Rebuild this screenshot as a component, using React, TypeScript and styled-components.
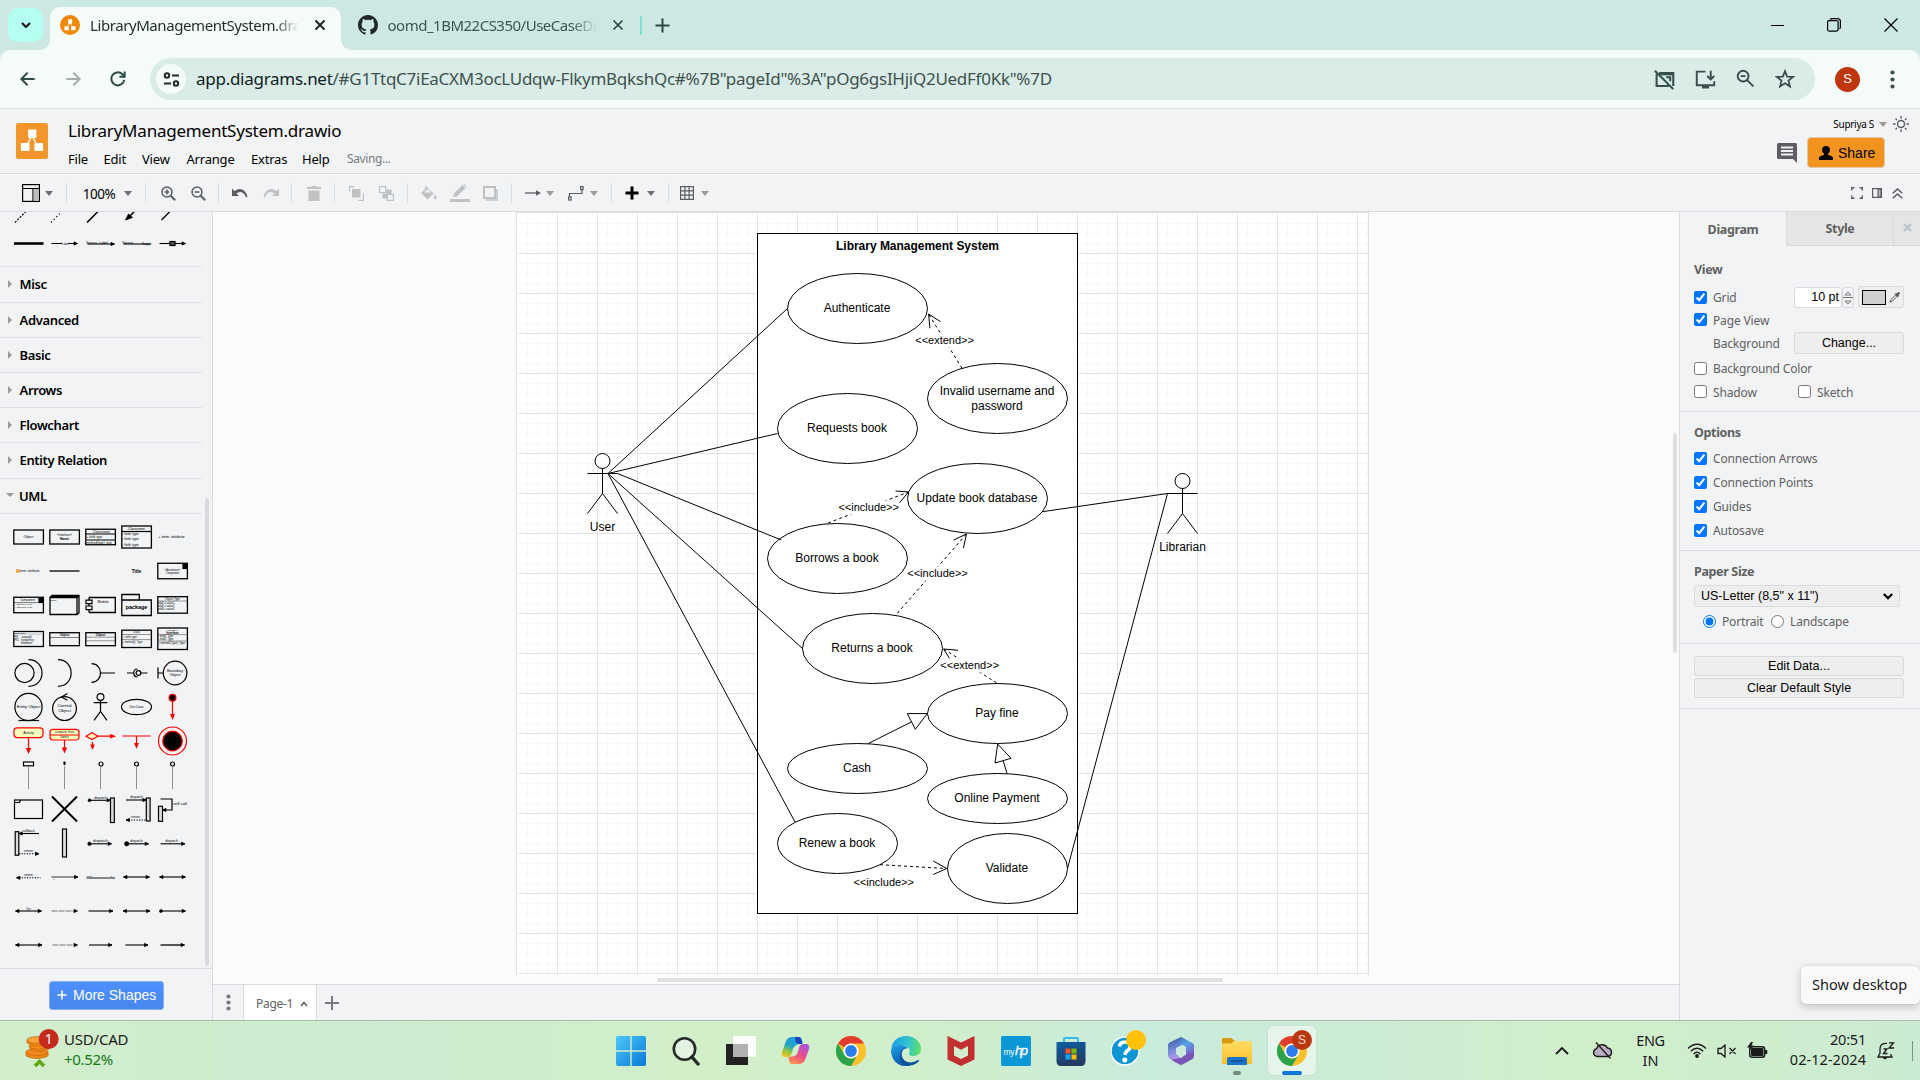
import React from "react";
import styled, { createGlobalStyle, css } from "styled-components";

const UI = `"Noto Sans", "Open Sans", sans-serif`;
const ARIAL = `"Liberation Sans", Arial, sans-serif`;

const GlobalStyle = createGlobalStyle`
  * { box-sizing: border-box; }
  html, body { margin: 0; padding: 0; overflow: hidden; }
  body { font-family: ${UI}; background: #f1f3f4; }
  button { font: inherit; border: 0; background: none; padding: 0; margin: 0; color: inherit; }
  svg { display: block; flex: none; }
`;

const Screen = styled.div`
  width: 1920px;
  height: 1080px;
  display: flex;
  flex-direction: column;
  overflow: hidden;
  position: relative;
`;

const Label = styled.span<{ $size: number; $ls?: number; $color?: string; $weight?: number; $arial?: boolean }>`
  font-family: ${(p) => (p.$arial ? ARIAL : UI)};
  font-size: ${(p) => p.$size}px;
  letter-spacing: ${(p) => p.$ls ?? 0}px;
  color: ${(p) => p.$color ?? "#000"};
  font-weight: ${(p) => p.$weight ?? 400};
  line-height: 20px;
  white-space: nowrap;
`;

/* ---------- Browser chrome ---------- */

const TabStrip = styled.div`
  height: 50px;
  flex: none;
  background: #cde8e2;
  display: flex;
  align-items: center;
  padding-left: 8px;
`;

const TabSearch = styled.button`
  width: 35px;
  height: 34px;
  border-radius: 10px;
  background: #b4fff2;
  display: grid;
  place-items: center;
`;

const Tab = styled.div<{ $active?: boolean; $w: number }>`
  width: ${(p) => p.$w}px;
  height: 43px;
  align-self: flex-end;
  display: flex;
  align-items: center;
  position: relative;
  padding-bottom: 7px;
  ${(p) =>
    p.$active
      ? css`
          margin-left: 7px;
          padding-left: 10px;
          background: #f4fbf8;
          border-radius: 10px 10px 0 0;
          &::before, &::after {
            content: "";
            position: absolute;
            bottom: 0;
            width: 10px;
            height: 10px;
          }
          &::before { left: -10px; background: radial-gradient(circle at 0 0, transparent 9.5px, #f4fbf8 10px); }
          &::after { right: -10px; background: radial-gradient(circle at 100% 0, transparent 9.5px, #f4fbf8 10px); }
        `
      : css`
          padding-left: 17px;
        `}
`;

const TabTitle = styled.div<{ $w: number; $ml: number }>`
  width: ${(p) => p.$w}px;
  margin-left: ${(p) => p.$ml}px;
  overflow: hidden;
  mask-image: linear-gradient(90deg, #000 88%, transparent 100%);
`;

const TabClose = styled.button<{ $ml: number }>`
  margin-left: ${(p) => p.$ml}px;
`;

const TabDivider = styled.i`
  width: 2px;
  height: 19px;
  background: #7ce3d3;
`;

const NewTab = styled.button`
  margin-left: 13px;
`;

const WindowButtons = styled.div`
  margin-left: auto;
  padding-right: 22px;
  display: flex;
  align-items: center;
  gap: 43px;
`;

const NavBar = styled.div`
  height: 59px;
  flex: none;
  background: #f4fbf8;
  border-bottom: 1px solid #dbe2e1;
  border-radius: 10px 10px 0 0;
  display: flex;
  align-items: center;
  padding-left: 18px;
`;

const NavBack = styled.div`
  background: #cde8e2;
  flex: none;
`;

const NavButtons = styled.div`
  display: flex;
  width: 132px;
  gap: 25px;
`;

const Omnibox = styled.div`
  width: 1665px;
  height: 42px;
  border-radius: 21px;
  background: #d9ece7;
  display: flex;
  align-items: center;
  padding: 0 20px 0 6px;
`;

const SiteInfo = styled.div`
  width: 30px;
  height: 30px;
  border-radius: 50%;
  background: #f4fbf8;
  display: grid;
  place-items: center;
  margin-right: 10px;
`;

const OmniActions = styled.div`
  margin-left: auto;
  display: flex;
  gap: 20px;
`;

const Avatar = styled.div`
  width: 25px;
  height: 25px;
  border-radius: 50%;
  background: #bf360c;
  margin-left: 20px;
  display: grid;
  place-items: center;
`;

const NavMenu = styled.div`
  margin-left: 30px;
`;

/* ---------- Editor header ---------- */

const Header = styled.header`
  height: 65px;
  flex: none;
  background: #f1f3f5;
  border-bottom: 1px solid #d8dadd;
  display: flex;
  padding: 14px 11px 0 16px;
`;

const TitleBlock = styled.div`
  margin-left: 20px;
  display: flex;
  flex-direction: column;
`;

const FileTitle = styled.div`
  height: 24px;
  margin-top: -4px;
  display: flex;
  align-items: center;
`;

const MenuRow = styled.nav`
  display: flex;
  margin-top: 6px;
  height: 20px;
  align-items: center;
`;

const MenuItem = styled.span<{ $w: number }>`
  width: ${(p) => p.$w}px;
  display: flex;
`;

const HeaderRight = styled.div`
  margin-left: auto;
  display: flex;
  flex-direction: column;
  align-items: flex-end;
  margin-top: -8px;
`;

const UserRow = styled.div`
  display: flex;
  align-items: center;
  height: 18px;
  margin-bottom: 4px;
`;

const ShareRow = styled.div`
  display: flex;
  align-items: center;
  gap: 10px;
  margin-right: 24px;
`;

const ShareButton = styled.button`
  width: 78px;
  height: 31px;
  background: #f2931e;
  border: 1px solid #dcc9ae;
  border-radius: 4px;
  display: flex;
  align-items: center;
  padding-left: 11px;
  gap: 5px;
`;

const Toolbar = styled.div`
  height: 38px;
  flex: none;
  background: #f1f3f5;
  border-top: 1px solid #fff;
  border-bottom: 1px solid #d8dadd;
  display: flex;
  align-items: center;
`;

const Slot = styled.span<{ $w: number; $ml: number; $dim?: boolean }>`
  width: ${(p) => p.$w}px;
  margin-left: ${(p) => p.$ml}px;
  display: flex;
  justify-content: center;
  color: ${(p) => (p.$dim ? "#bfc1c3" : "#5b5d60")};
`;

const Zoom = styled.div`
  padding-top: 2px;
  display: flex;
`;

const Sep = styled.i<{ $ml: number }>`
  width: 1px;
  height: 20px;
  background: #dcdfe2;
  margin-left: ${(p) => p.$ml}px;
`;

const Caret = styled.i<{ $c?: string }>`
  width: 0;
  height: 0;
  border: 4.5px solid transparent;
  border-top: 5px solid ${(p) => p.$c ?? "#6b6d70"};
  border-bottom: 0;
`;

const ToolbarRight = styled.div`
  margin-left: auto;
  display: flex;
  gap: 8px;
  padding-right: 17px;
  align-items: center;
`;

/* ---------- Workspace ---------- */

const Workspace = styled.div`
  height: 808px;
  flex: none;
  display: flex;
  background: #f1f3f5;
`;

const Sidebar = styled.aside`
  width: 213px;
  border-right: 1px solid #d8dadd;
  display: flex;
  flex-direction: column;
`;

const Palette = styled.div`
  height: 756px;
  overflow: hidden;
  display: flex;
`;

const PaletteBody = styled.div`
  width: 202px;
`;

const PaletteTrack = styled.div`
  padding: 286px 0 0 3px;
`;

const PaletteThumb = styled.i`
  display: block;
  width: 4px;
  height: 468px;
  border-radius: 2px;
  background: #d9dadd;
`;

const ShapeGrid = styled.div<{ $mt?: number; $pt?: number; $h?: number }>`
  display: grid;
  grid-template-columns: repeat(5, 36px);
  grid-auto-rows: 34px;
  padding-left: 10px;
  margin-top: ${(p) => p.$mt ?? 0}px;
  padding-top: ${(p) => p.$pt ?? 0}px;
  height: ${(p) => (p.$h ? `${p.$h}px` : "auto")};
`;

const Category = styled.div<{ $h: number }>`
  height: ${(p) => p.$h}px;
  padding-bottom: ${(p) => (p.$h > 35 ? 2 : 0)}px;
  border-top: 1px solid #dfe1e4;
  display: flex;
  align-items: center;
`;

const Twisty = styled.i<{ $open?: boolean }>`
  width: 0;
  height: 0;
  margin: ${(p) => (p.$open ? "0 5px 2px 6px" : "0 7.5px 0 8px")};
  ${(p) =>
    p.$open
      ? css`border: 4.5px solid transparent; border-top: 4px solid #9a9a9a; border-bottom: 0;`
      : css`border: 4.5px solid transparent; border-left: 4.5px solid #9a9a9a; border-right: 0;`}
`;

const PaletteEnd = styled.div`
  border-top: 1px solid #dfe1e4;
`;

const SidebarFooter = styled.div`
  flex: 1;
  border-top: 1px solid #d8dadd;
  padding: 12px 0 0 49px;
`;

const MoreShapes = styled.button`
  width: 115px;
  height: 29px;
  border-radius: 3px;
  border: 1px solid #86aef0;
  background: linear-gradient(#4d90fe, #4787ed);
  display: flex;
  align-items: center;
  gap: 6px;
  padding: 0 0 1px 7px;
`;

const Center = styled.main`
  width: 1466px;
  display: flex;
  flex-direction: column;
`;

const PageTabs = styled.div`
  height: 36px;
  border-top: 1px solid #d8dadd;
  display: flex;
  align-items: center;
`;

const PageMenu = styled.div`
  width: 31px;
  height: 35px;
  border-right: 1px solid #d8dadd;
  display: grid;
  place-items: center;
`;

const PageTab = styled.div`
  width: 73px;
  height: 35px;
  background: #fff;
  border-right: 1px solid #d8dadd;
  display: flex;
  align-items: center;
  gap: 7px;
  padding: 2px 0 0 12px;
`;

const AddPage = styled.button`
  margin-left: 8px;
`;

/* ---------- Format panel ---------- */

const Format = styled.aside`
  width: 241px;
  border-left: 1px solid #d8dadd;
`;

const FormatTabs = styled.div`
  height: 34px;
  display: flex;
`;

const FormatTab = styled.div<{ $w: number; $off?: boolean }>`
  width: ${(p) => p.$w}px;
  height: 34px;
  display: flex;
  align-items: center;
  justify-content: center;
  ${(p) =>
    p.$off
      ? css`
          background: #e5e5e5;
          border-left: 1px solid #d8dadd;
          border-bottom: 1px solid #d8dadd;
        `
      : css`
          padding-top: 2px;
        `}
`;

const CloseBox = styled.span`
  padding-bottom: 3px;
`;

const Section = styled.section<{ $h: number; $pt: number }>`
  height: ${(p) => p.$h}px;
  padding: ${(p) => p.$pt}px 15px 0 14px;
  border-bottom: 1px solid #d8dadd;
`;

const Heading = styled.div<{ $mb: number }>`
  height: 20px;
  display: flex;
  margin-bottom: ${(p) => p.$mb}px;
`;

const Row = styled.div<{ $h: number; $indent?: number }>`
  height: ${(p) => p.$h}px;
  padding-left: ${(p) => p.$indent ?? 0}px;
  display: flex;
  align-items: center;
  input { margin: 0; width: 13px; height: 13px; flex: none; }
`;

const FieldText = styled.span<{ $w?: number; $ml?: number }>`
  margin-left: ${(p) => p.$ml ?? 6}px;
  width: ${(p) => (p.$w ? `${p.$w}px` : "auto")};
  padding-top: 2px;
  display: flex;
`;

const SizeField = styled.div`
  width: 48px;
  height: 21px;
  background: #fff;
  border: 1px solid #d8dadd;
  border-radius: 3px;
  display: flex;
  align-items: center;
  justify-content: flex-end;
  padding-right: 2px;
`;

const Spinner = styled.div`
  width: 12px;
  height: 21px;
  border: 1px solid #d8dadd;
  border-radius: 3px;
`;

const ColorButton = styled.button`
  margin-left: 4px;
  width: 46px;
  height: 22px;
  border: 1px solid #d8dadd;
  border-radius: 3px;
  background: #eee;
  display: flex;
  align-items: center;
  padding-left: 3px;
  gap: 3px;
`;

const Swatch = styled.i`
  width: 24px;
  height: 15px;
  border: 1px solid #000;
  background: #d0d0d0;
`;

const PlainButton = styled.button<{ $w: number; $h: number; $mb?: number }>`
  width: ${(p) => p.$w}px;
  height: ${(p) => p.$h}px;
  margin-bottom: ${(p) => p.$mb ?? 0}px;
  border: 1px solid #d8dadd;
  border-radius: 3px;
  background: #eee;
  display: flex;
  align-items: center;
  justify-content: center;
`;

const PaperSelect = styled.div`
  width: 206px;
  height: 22px;
  border: 1px solid #d8dadd;
  border-radius: 3px;
  background: #eee;
  display: flex;
  align-items: center;
  justify-content: space-between;
  padding: 0 6px;
`;

/* ---------- Desktop taskbar ---------- */

const Taskbar = styled.footer`
  height: 60px;
  flex: none;
  border-top: 1px solid #a9b8aa;
  background: linear-gradient(90deg, #d2eecb 0%, #cdecd2 18%, #d2efc9 36%, #d0eecd 50%, #c9ebdc 60%, #cdecd4 72%, #d2efcb 83%, #cbebd2 100%);
  display: flex;
  align-items: center;
`;

const Widget = styled.div`
  width: 603px;
  padding: 0 0 4px 25px;
  display: flex;
  align-items: center;
`;

const Stack = styled.div<{ $align?: string; $ml?: number; $w?: number; $up?: number }>`
  display: flex;
  flex-direction: column;
  align-items: ${(p) => p.$align ?? "flex-start"};
  margin-left: ${(p) => p.$ml ?? 0}px;
  width: ${(p) => (p.$w ? `${p.$w}px` : "auto")};
  padding-bottom: ${(p) => p.$up ?? 0}px;
`;

const Apps = styled.div`
  display: grid;
  grid-template-columns: repeat(13, 55.1px);
`;

const AppSlot = styled.div<{ $active?: boolean; $running?: boolean }>`
  height: 49px;
  display: grid;
  place-items: center;
  position: relative;
  border-radius: 5px;
  ${(p) =>
    p.$active &&
    css`
      width: 48px;
      justify-self: center;
      background: rgba(255, 255, 255, 0.52);
      box-shadow: 0 0 1px rgba(0, 0, 0, 0.25);
    `}
  ${(p) =>
    (p.$active || p.$running) &&
    css`
      &::after {
        content: "";
        position: absolute;
        bottom: 0;
        height: 4px;
        border-radius: 2px;
        width: ${p.$active ? 20 : 8}px;
        background: ${p.$active ? "#0b78d6" : "#76897c"};
      }
    `}
`;

const Tray = styled.div`
  margin-left: auto;
  display: flex;
  align-items: center;
  height: 59px;
`;

const TrayIcon = styled.span<{ $ml: number }>`
  margin-left: ${(p) => p.$ml}px;
`;

const DesktopEdge = styled.i`
  width: 1px;
  height: 20px;
  background: #7d8f82;
  margin: 0 7px 0 17px;
`;

const Tooltip = styled.div`
  position: absolute;
  right: 0;
  bottom: 76px;
  width: 119px;
  height: 38px;
  border-radius: 5px;
  background: #f9f9fa;
  box-shadow: 0 3px 8px rgba(0, 0, 0, 0.2), 0 0 1px rgba(0, 0, 0, 0.25);
  display: flex;
  align-items: center;
  padding: 0 0 2px 11px;
`;

/* ---------- Diagram ---------- */

type UseCase = { x: number; y: number; w: number; h: number; lines: string[] };

const useCases: UseCase[] = [
  { x: 787.5, y: 273.5, w: 140, h: 70, lines: ["Authenticate"] },
  { x: 927.5, y: 363.5, w: 140, h: 70, lines: ["Invalid username and", "password"] },
  { x: 777.5, y: 393.5, w: 140, h: 70, lines: ["Requests book"] },
  { x: 907.5, y: 463.5, w: 140, h: 70, lines: ["Update book database"] },
  { x: 767.5, y: 523.5, w: 140, h: 70, lines: ["Borrows a book"] },
  { x: 802.5, y: 613.5, w: 140, h: 70, lines: ["Returns a book"] },
  { x: 927.5, y: 683.5, w: 140, h: 60, lines: ["Pay fine"] },
  { x: 787.5, y: 743.5, w: 140, h: 50, lines: ["Cash"] },
  { x: 927.5, y: 773.5, w: 140, h: 50, lines: ["Online Payment"] },
  { x: 777.5, y: 813.5, w: 120, h: 60, lines: ["Renew a book"] },
  { x: 947.5, y: 833.5, w: 120, h: 70, lines: ["Validate"] },
];

const associations = [
  "M608 473.5L787.5 308.5",
  "M608 473.5L777.5 433.5",
  "M617.5 473.5L781.3 540",
  "M608 473.5L802.5 648.5",
  "M608 473.5L795 822",
  "M1167.5 493.5L1042.4 511.7",
  "M1167.5 493.5L1067.5 868.5",
  "M868.3 743.5L911.3 722",
  "M1007 773.5L1003.3 761",
];

const dependencies = [
  { line: "M962 368.3L928.6 314", head: "M929.9 328.3L928.6 314L940.6 321.7", text: "<<extend>>", tx: 944.6, ty: 340.5, w: 58 },
  { line: "M828 523L908.5 492", head: "M895.5 491L908.5 492L899.6 502.7", text: "<<include>>", tx: 868.7, ty: 507.5, w: 60 },
  { line: "M897.3 613.3L966.5 534", head: "M953.6 540L966.5 534L963.4 548", text: "<<include>>", tx: 937.5, ty: 573.5, w: 60 },
  { line: "M996.7 683L943.7 649", head: "M958 650.3L943.7 649L949.7 658.7", text: "<<extend>>", tx: 969.7, ty: 665.5, w: 58 },
  { line: "M880 864.7L946.7 868.5", head: "M933.3 861L946.7 868.5L933.3 874.5", text: "<<include>>", tx: 883.7, ty: 882.5, w: 60 },
];

const Board = styled.svg`
  background: #fbfbfb;
  text {
    font-family: ${ARIAL};
    font-size: 12px;
    text-anchor: middle;
    fill: #000;
  }
  .edge { font-size: 11px; }
  .title { font-weight: 700; }
`;

const Actor = ({ x, y, name }: { x: number; y: number; name: string }) => (
  <g stroke="#000" fill="none">
    <circle cx={x} cy={y + 7.5} r={7.5} fill="#fff" />
    <path d={`M${x} ${y + 15}V${y + 40}M${x - 15} ${y + 20}H${x + 15}M${x - 15} ${y + 60}L${x} ${y + 40}L${x + 15} ${y + 60}`} />
    <text x={x} y={y + 77} stroke="none">{name}</text>
  </g>
);

const Diagram = () => (
  <Board width="1466" height="772" viewBox="213 212 1466 772">
    <defs>
      <pattern id="minor" x="517" y="213" width="10" height="10" patternUnits="userSpaceOnUse">
        <path d="M0.5 0V10M0 0.5H10" stroke="#f8f8f8" fill="none" />
      </pattern>
      <pattern id="major" x="517" y="213" width="40" height="40" patternUnits="userSpaceOnUse">
        <path d="M0.5 0V40M0 0.5H40" stroke="#e4e4e4" fill="none" />
      </pattern>
    </defs>
    <rect x="516" y="212" width="853" height="763" fill="#dfe0e1" />
    <rect x="517" y="213" width="851" height="762" fill="#fff" />
    <rect x="518" y="214" width="850" height="761" fill="url(#minor)" />
    <rect x="518" y="214" width="850" height="761" fill="url(#major)" />
    <rect x="757.5" y="233.5" width="320" height="680" fill="#fff" stroke="#000" />
    <text className="title" x="917.5" y="250" textLength="163">Library Management System</text>
    {useCases.map((u) => (
      <g key={u.lines[0]}>
        <ellipse cx={u.x + u.w / 2} cy={u.y + u.h / 2} rx={u.w / 2} ry={u.h / 2} fill="#fff" stroke="#000" />
        {u.lines.map((l, i) => (
          <text key={l} x={u.x + u.w / 2 - 0.5} y={u.y + u.h / 2 + 3.5 + (i - (u.lines.length - 1) / 2) * 15}>{l}</text>
        ))}
      </g>
    ))}
    {associations.map((d) => <path key={d} d={d} stroke="#000" fill="none" />)}
    <path d="M927.3 713.6H907.3L915.3 729.3Z M997.7 744L1011 758.3L995 763Z" fill="#fff" stroke="#000" />
    {dependencies.map((d) => (
      <g key={d.line}>
        <path d={d.line} stroke="#000" strokeDasharray="3 3" fill="none" />
        <path d={d.head} stroke="#000" fill="none" />
        <rect x={d.tx - d.w / 2} y={d.ty - 7} width={d.w} height="14" fill="#fff" />
        <text className="edge" x={d.tx} y={d.ty + 3.5}>{d.text}</text>
      </g>
    ))}
    <Actor x={602.5} y={453.5} name="User" />
    <Actor x={1182.5} y={473.5} name="Librarian" />
    <rect x="657" y="978" width="566" height="4" rx="2" fill="#dfdfdf" />
    <rect x="1673" y="433" width="4" height="220" rx="2" fill="#dfdfdf" />
  </Board>
);

/* ---------- Palette thumbnails ---------- */

const ThumbSvg = styled.svg`
  stroke: #000;
  fill: none;
  stroke-width: 1.2;
  overflow: hidden;
  font-family: ${ARIAL};
  font-size: 3.4px;
  text {
    stroke: none;
    fill: #000;
    text-anchor: middle;
  }
`;

const T = ({ children }: { children?: React.ReactNode }) => (
  <ThumbSvg width="36" height="34" viewBox="-18.5 -17 36 34">{children}</ThumbSvg>
);

const Tri = ({ x, y = 0, dir = 1, fill = "#000" }: { x: number; y?: number; dir?: number; fill?: string }) => (
  <path d={`M${x} ${y}L${x - 3.5 * dir} ${y - 1.7}V${y + 1.7}Z`} fill={fill} strokeWidth={0.6} />
);

const Line = ({ a = -13, b = 13, y = 0, dash, end = true, start, w = 1.1, c = "#000" }: {
  a?: number; b?: number; y?: number; dash?: string; end?: boolean; start?: boolean; w?: number; c?: string;
}) => (
  <>
    <path d={`M${a} ${y}H${b}`} strokeDasharray={dash} strokeWidth={w} stroke={c} />
    {end && <Tri x={b} y={y} />}
    {start && <Tri x={a} y={y} dir={-1} />}
  </>
);

const Box = ({ h, y = -h / 2 }: { h: number; y?: number }) => (
  <rect x={-14.7} y={y} width={29.6} height={h} strokeWidth={1.3} />
);

const topRow = [
  <T key="a"><path d="M-13.5 13.5L13 -13" strokeDasharray="2 1.4" /></T>,
  <T key="b"><path d="M-13.5 13.5L13 -13" strokeDasharray="1.2 2.6" /></T>,
  <T key="c"><path d="M-13.5 13.5L13 -13" strokeWidth={1.5} /></T>,
  <T key="d"><path d="M-9 9.5L13 -13" strokeWidth={1.5} /><path d="M-11 11L-4 8.5L-8 5Z" fill="#000" strokeWidth={0.8} /></T>,
  <T key="e"><path d="M-11 11L13 -13" strokeWidth={1.3} /></T>,
  <T key="f"><path d="M-14.5 0.5H15" strokeWidth={2.6} /></T>,
  <T key="g"><path d="M-13 0.5H-2.5M4 0.5H13" strokeWidth={1.1} /><Tri x={13} y={0.5} /><text x="1" y="1.6" fontSize="2.8">Label</text></T>,
  <T key="h"><Line a={-13} b={14} y={1} /><text x="-9" y="0.6">Source</text><text x="3" y="0.6">Label</text></T>,
  <T key="i"><Line a={-13} b={14} y={1} end={false} /><text x="-9" y="0.6">Source</text><text x="10" y="1.8">Target</text></T>,
  <T key="j"><Line a={-13} b={13} y={0.5} /><rect x="-2.5" y="-1.5" width="5" height="4" fill="#555" /></T>,
];

const attrs = (ys: number[]) => ys.map((y) => <text key={y} x="-6.5" y={y}>+ field: type</text>);

const umlShapes = [
  <T><Box h={14} /><text x="0" y="1">Object</text></T>,
  <T><Box h={14} /><text x="0" y="-1" fontSize="3">«interface»</text><text x="0" y="2.9" fontWeight="700">Name</text></T>,
  <T><Box h={15.5} /><path d="M-14.7 -3H15M-14.7 3H15" /><text x="1" y="-4.2">Classname</text><text x="-6" y="1.4" fontSize="3">+ field: type</text><text x="-2.500" y="6.6" fontSize="3">+ method(type): type</text></T>,
  <T><Box h={22} /><path d="M-14.7 -5.5H15" /><text x="0" y="-7">Classname</text>{attrs([-2.2, 3, 8.5])}</T>,
  <T><text x="-1" y="1" fontSize="3.8">+ item: attribute</text></T>,

  <T><rect x="-12.5" y="-1.8" width="3.6" height="3.6" fill="#f0a63a" stroke="none" /><text x="1" y="1" fontSize="3.3">item: attribute</text></T>,
  <T><Line a={-15} b={15} end={false} w={1.3} /></T>,
  <T />,
  <T><text x="0" y="1.8" fontSize="4.6" fontWeight="700">Title</text></T>,
  <T><Box h={15.5} /><rect x="10.5" y="-6.5" width="3.6" height="4" fill="#000" /><text x="0" y="-0.5" fontSize="2.6">«Annotation»</text><text x="0" y="2.6" fontSize="2.6">Component</text></T>,

  <T><Box h={15.5} /><rect x="10.5" y="-6.5" width="3.6" height="4" fill="#000" /><path d="M-14.7 -2.4H10" strokeWidth={0.5} /><text x="-1" y="-4" fontSize="2.8">Component</text><text x="-5.5" y="0" fontSize="2.4">+ Attribute1: Type</text><text x="-5.5" y="3" fontSize="2.4">+ Attribute2: Type</text></T>,
  <T><path d="M-14.5 -7.5H12.5V9.5H-14.5ZM-14.5 -7.5L-12.5 -9.5H14.5V8L12.5 9.5M12.5 -7.5L14.5 -9.5" strokeWidth={1.3} /><path d="M-13 -8.5H14" strokeWidth={1.6} /><text x="-11" y="-4.5" fontSize="2.4">Block</text></T>,
  <T><path d="M-11.5 -7.5H14.8V7.5H-11.5M-11.5 -7.5V7.5" strokeWidth={1.3} /><path d="M-14.5 -4.8H-8.5V-1.4H-14.5ZM-14.5 1H-8.5V4.6H-14.5Z" fill="#f1f3f5" /><text x="2.5" y="-2.5">Module</text></T>,
  <T><path d="M-14.7 -5H14.8V10.5H-14.7ZM-14.7 -5V-10.5H2.8V-5" strokeWidth={1.3} /><text x="0" y="3.8" fontSize="5.4" fontWeight="700">package</text></T>,
  <T><Box h={16.5} y={-8.3} /><path d="M-14.7 -4H15" strokeWidth={0.4} /><text x="0" y="-5.2" fontSize="2.8">Object:Type</text><text x="-6.5" y="-1.2" fontSize="2.6">field1 = value1</text><text x="-6.5" y="2" fontSize="2.6">field2 = value2</text><text x="-6.5" y="5.4" fontSize="2.6">field3 = value3</text></T>,

  <T><Box h={15} /><rect x="-14" y="-7" width="28" height="3" fill="#d5d7da" stroke="none" /><text x="-9" y="-4.6" fontSize="2.4">Tablename</text><text x="-12" y="-1.5" fontSize="2.6">PK</text><text x="-2" y="-1.5" fontSize="2.6">uniqueId</text><text x="-12" y="1.8" fontSize="2.6">FK1</text><text x="-1" y="1.8" fontSize="2.6">foreignKey</text><text x="-2" y="5" fontSize="2.6">fieldname</text></T>,
  <T><Box h={13} y={-6.3} /><path d="M-14.7 -1.5H15" strokeWidth={0.5} /><text x="0" y="-3.2" fontSize="3" fontWeight="700">Object</text></T>,
  <T><Box h={13} y={-6.3} /><path d="M-14.7 -1.8H15M-14.7 1.8H15" strokeWidth={0.4} /><text x="0" y="-3.2" fontSize="3" fontWeight="700">Object</text></T>,
  <T><Box h={17.3} y={-8.8} /><path d="M-14.7 -4.5H15M-14.7 0.6H15" strokeWidth={0.4} /><text x="0" y="-5.6" fontSize="2.8">Class</text><text x="-6.5" y="-1.2" fontSize="2.6">+ field: type</text><text x="-4" y="4" fontSize="2.6">+ method(): Type</text></T>,
  <T><Box h={21.5} y={-11} /><path d="M-14.7 -4.4H15M-14.7 2H15" strokeWidth={0.4} /><text x="0" y="-8.2" fontSize="2.4">«interface»</text><text x="0" y="-5.4" fontSize="3" fontWeight="700">Interface</text><text x="-7" y="-1.6" fontSize="2.6">+ field1: Type</text><text x="-7" y="1.2" fontSize="2.6">+ field2: Type</text><text x="-1" y="5.2" fontSize="2.6">+ method1(Type): Type</text></T>,

  <T><circle cx="-4" r="9.6" /><path d="M0 -13.3C18 -13.3 18 13.3 0 13.3" /></T>,
  <T><path d="M-6.5 -13.3C11 -13.3 11 13.3 -6.5 13.3" /></T>,
  <T><path d="M-9 -9.3C3 -9.3 3 9.3 -9 9.3M0 0H14.5" /></T>,
  <T><path d="M-9.5 0H-2.5M4.5 0H11" /><circle cx="2" r="2.4" /><path d="M1 -4C-4 -4 -4 4 1 4" /></T>,
  <T><circle cx="2.6" r="11.8" /><path d="M-14.5 -5.5V5.5M-14.5 0H-9.2" /><text x="2.6" y="-1.2" fontSize="3.8">Boundary</text><text x="2.6" y="3.4" fontSize="3.8">Object</text></T>,

  <T><circle r="13.6" /><path d="M-10 13.5H10.5" /><text x="0" y="0.5" fontSize="4.2">Entity Object</text></T>,
  <T><circle cy="1.6" r="11.9" /><path d="M3 -13.5L-3 -10L3 -6.8" /><text x="0" y="0.4" fontSize="4.4">Control</text><text x="0" y="5.4" fontSize="4.4">Object</text></T>,
  <T><circle cy="-10" r="3.4" /><path d="M0 -6.6V4.5M-6.8 -4.3H6.8M-6.5 13.3L0 4.5L6.5 13.3" /></T>,
  <T><ellipse rx="15" ry="7.7" /><text x="0" y="1" fontSize="3.2">Use Case</text></T>,
  <T><g stroke="#f00"><circle cy="-9.3" r="3.4" fill="#000" /><path d="M0 -6V11M-1.6 7.5L0 11.4L1.6 7.5Z" fill="#f00" /></g></T>,

  <T><g stroke="#f00"><rect x="-14.5" y="-13.2" width="29" height="9.8" rx="3" fill="#ffffc0" /><path d="M0 -3.4V11M-1.8 7.5L0 11.6L1.8 7.5Z" fill="#f00" /></g><text x="0" y="-7.2">Activity</text></T>,
  <T><g stroke="#f00"><rect x="-14.5" y="-11.6" width="29" height="10.6" rx="3" fill="#ffffc0" /><path d="M-14.5 -6H14.5M0 -1V10M-1.8 7L0 11L1.8 7Z" fill="#f00" /></g><text x="0" y="-7.6" fontSize="2.6">Composite State</text><text x="0" y="-2.6" fontSize="2.6">Subtitle</text></T>,
  <T><g stroke="#f00"><path d="M-14.5 -4.8L-8.5 -8.2L-2.5 -4.8L-8.5 -1.5Z" fill="#ffffc0" /><path d="M-2.5 -4.8H12M10 -6.2L14 -4.8L10 -3.4ZM-8 1V7M-9.4 4L-8 7.5L-6.6 4Z" fill="#f00" /></g></T>,
  <T><g stroke="#f00"><path d="M-14.3 -5H14.3M0 -5V5M-1.6 2.5L0 6.4L1.6 2.5Z" fill="#f00" /></g></T>,
  <T><g stroke="#f00"><circle r="14" /><circle r="9.8" fill="#000" /></g></T>,

  <T><rect x="-5" y="-13" width="10" height="3.8" /><path d="M0 -9V14" stroke="#777" strokeWidth={0.8} /></T>,
  <T><path d="M0 -13.5V-10M-1.2 -12H1.2" strokeWidth={1.6} /><path d="M0 -9V14" stroke="#777" strokeWidth={0.8} /></T>,
  <T><circle cx="0.5" cy="-11" r="2" /><path d="M0 -9V14M-2.6 -11H-1.5" stroke="#777" strokeWidth={0.8} /></T>,
  <T><circle cy="-11" r="2" /><path d="M0 -9V14" stroke="#777" strokeWidth={0.8} /></T>,
  <T><circle cy="-11" r="2" /><path d="M0 -9V14" stroke="#777" strokeWidth={0.8} /></T>,

  <T><rect x="-14" y="-9" width="28" height="18.5" /><path d="M-14 -6.5H-9L-8 -9" /></T>,
  <T><path d="M-12.5 -12.5L12.5 12.5M12.5 -12.5L-12.5 12.5" strokeWidth={1.9} /></T>,
  <T><rect x="10" y="-11" width="3.8" height="24.5" fill="#ddd" /><Line a={-11} b={10} y={-8.7} /><circle cx="-11" cy="-8.7" r="1.5" fill="#000" strokeWidth={0.5} /><text x="0" y="-10.4">dispatch</text></T>,
  <T><rect x="9.8" y="-11" width="3.8" height="23" fill="#ddd" /><Line a={-10.5} b={9.8} y={-9} /><Line a={-10.5} b={9} y={11} dash="1.3 1.3" end={false} start /><text x="0" y="-11">dispatch</text><text x="-1" y="9">return</text></T>,
  <T><rect x="-14" y="-2.7" width="4" height="15" fill="#ddd" /><path d="M-12 -10H-0.5V1H-9" /><Tri x={-10} y={1} dir={-1} /><text x="7.5" y="-4.4" fontSize="4.2">self call</text></T>,

  <T><rect x="-13.3" y="-11.3" width="3.6" height="23.5" fill="#ddd" /><Line a={-9.7} b={10.5} y={-9.5} end={false} start /><Line a={-9.5} b={10.5} y={10.8} dash="1.3 1.3" /><text x="0" y="-11.5">callback</text><text x="0" y="8.6">return</text></T>,
  <T><rect x="-2" y="-14" width="4" height="28" fill="#ddd" /></T>,
  <T><Line a={-11} b={11} y={0.8} /><circle cx="-11" cy="0.8" r="1.8" fill="#000" strokeWidth={0.5} /><text x="0" y="-1.4" fontSize="4">dispatch</text></T>,
  <T><Line a={-10} b={12} y={0.8} /><circle cx="-9.8" cy="0.8" r="2.2" fill="#000" strokeWidth={0.6} /><text x="0" y="-1.4">dispatch</text></T>,
  <T><Line a={-12} b={12.5} y={0.8} /><text x="-1" y="-0.8">dispatch</text></T>,

  <T><Line a={-12} b={12} y={0.8} dash="1.3 1.3" end={false} start /><text x="0" y="-1.4">return</text></T>,
  <T><Line a={-13} b={13.5} y={0} c="#444" /><text x="-11" y="2.6" fontSize="2.2">1</text></T>,
  <T><Line a={-14} b={14.5} y={1} end={false} w={0.9} /><text x="-11" y="0" fontSize="2.4">name</text><text x="11" y="0" fontSize="2.4">1</text></T>,
  <T><Line start /></T>,
  <T><Line start /></T>,

  <T><Line start /><text x="0" y="-0.6" fontSize="2.6">Use</text></T>,
  <T><Line a={-13} dash="6 1" w={0.8} c="#555" /></T>,
  <T><Line a={-12} b={12.5} /></T>,
  <T><Line a={-13.5} b={13.5} start /></T>,
  <T><Line a={-12} b={13} /><circle cx="-11.5" r="1.6" fill="#000" strokeWidth={0.5} /></T>,

  <T><Line a={-13} b={13.5} start /></T>,
  <T><Line a={-12} dash="6 1" w={0.8} c="#555" /></T>,
  <T><Line a={-11.5} b={11.5} /></T>,
  <T><Line a={-11} b={11.5} /></T>,
  <T><Line a={-12} b={12} w={1.3} /></T>,
];

/* ---------- Icons ---------- */

const I = ({ w = 20, h = w, vb = "0 0 24 24", sw = 2, children, fill = "none" }: {
  w?: number; h?: number; vb?: string; sw?: number; fill?: string; children: React.ReactNode;
}) => (
  <svg width={w} height={h} viewBox={vb} fill={fill} stroke={fill === "none" ? "currentColor" : "none"} strokeWidth={sw}>{children}</svg>
);

const DrawioMark = () => (
  <g stroke="#fff" strokeWidth="1.4" fill="#fff">
    <path d="M16 13L9 25M16 13L23 25" fill="none" />
    <rect x="12" y="6.500" width="8.500" height="8.500" rx="1" stroke="none" />
    <rect x="4.5" y="20" width="9" height="8" rx="1" stroke="none" />
    <rect x="18.5" y="20" width="9" height="8" rx="1" stroke="none" />
  </g>
);

const Chrome = () => (
  <svg width="30" height="30" viewBox="0 0 30 30">
    <circle cx="15" cy="15" r="15" fill="#fbc02a" />
    <path d="M15 0A15 15 0 0 1 28 7.5H15A7.5 7.5 0 0 0 8.5 11.2L2 7.5A15 15 0 0 1 15 0Z" fill="#e33b2e" />
    <path d="M2 7.5L8.5 18.8A7.5 7.5 0 0 0 21.5 18.8L15 30A15 15 0 0 1 2 7.5Z" fill="#2ba24c" />
    <circle cx="15" cy="15" r="7.6" fill="#fff" />
    <circle cx="15" cy="15" r="5.9" fill="#2b7de9" />
  </svg>
);

const badge = (fill: string, text?: string) => (
  <g>
    <circle cx="25" cy="4" r="10" fill={fill} />
    {text && <text x="25" y="8.2" textAnchor="middle" fontFamily={ARIAL} fontSize="12" fill="#f7dfd6">{text}</text>}
  </g>
);

const OverIcon = styled.div`
  position: relative;
  > svg:last-child { position: absolute; left: 0; top: 0; overflow: visible; }
`;

const taskIcons: { id: string; icon: React.ReactNode; active?: boolean; running?: boolean }[] = [
  { id: "start", icon: (
    <svg width="30" height="30"><defs><linearGradient id="win" x2="1" y2="1"><stop stopColor="#4cc9fb" /><stop offset="1" stopColor="#0a78d6" /></linearGradient></defs>
      <path d="M2 0H14.3V14.3H0V2Q0 0 2 0ZM15.7 0H28Q30 0 30 2V14.3H15.7ZM0 15.7H14.3V30H2Q0 30 0 28ZM15.7 15.7H30V28Q30 30 28 30H15.7Z" fill="url(#win)" /></svg>) },
  { id: "search", icon: <svg width="28" height="30" viewBox="0 0 28 30" fill="none" stroke="#262a28"><circle cx="12.5" cy="13" r="10.7" strokeWidth="2.6" fill="#e3f3df" /><path d="M20 21L26 28" strokeWidth="3.4" strokeLinecap="round" /></svg> },
  { id: "taskview", icon: <svg width="30" height="30"><rect x="0" y="8" width="22" height="21" fill="#222" /><rect x="7" y="0" width="23" height="21" fill="#fff" opacity="0.92" /><rect x="7" y="8" width="15" height="13" fill="#b0b2b1" /></svg> },
  { id: "copilot", icon: (
    <svg width="29" height="27" viewBox="0 0 29 27"><defs>
      <linearGradient id="cpa" x1="0.6" y1="0" x2="0.2" y2="1"><stop stopColor="#1c9be8" /><stop offset="0.45" stopColor="#23a7c4" /><stop offset="0.75" stopColor="#9cc63f" /><stop offset="1" stopColor="#f6c21b" /></linearGradient>
      <linearGradient id="cpb" x1="0.7" y1="0" x2="0.2" y2="1"><stop stopColor="#b052dd" /><stop offset="0.55" stopColor="#ee5080" /><stop offset="1" stopColor="#fd9a50" /></linearGradient></defs>
      <path d="M11 0H19Q21 1 21.5 6L15 8Q12 10 11.5 14L10 18Q9 20 6 20H4Q0 20 1 15L5 4Q7 0 11 0Z" fill="url(#cpa)" />
      <path d="M14 0H18Q20 0 21.5 7H18Q15 7 14.5 4Z" fill="#1b45b8" />
      <path d="M18 27H10Q8 26 7.5 20L14 19Q17 17 17.5 13L18.5 9Q19.5 7 23 7H25Q29 7 28 12L24 23Q22 27 18 27Z" fill="url(#cpb)" /></svg>) },
  { id: "chrome", icon: <Chrome /> },
  { id: "edge", icon: (
    <svg width="30" height="30" viewBox="0 0 30 30"><defs>
      <linearGradient id="eda" x1="0" y1="0.3" x2="1" y2="0.4"><stop stopColor="#1b9de0" /><stop offset="0.55" stopColor="#2fc3d0" /><stop offset="1" stopColor="#5fdf66" /></linearGradient>
      <linearGradient id="edb" x2="0.4" y2="1"><stop stopColor="#1fa0e4" /><stop offset="1" stopColor="#0a5cae" /></linearGradient></defs>
      <path d="M0.3 13C1 5 7 0 15 0C24 0 30 6 30 13C30 18 26 20 22 20C19 20 17.5 19 18 17.5C20 15 18 9 11 9C6 9 2 11 0.3 13Z" fill="url(#eda)" />
      <path d="M0 14C1 11 5 8.5 11 9C14 9.3 16 10.5 17 12C12 12 10 16 11 20C12 25 18 28 23 26.5C20 29 17 30 14 30C6 30 0 23 0 14Z" fill="url(#edb)" />
      <path d="M17 12C12 12 9.5 16 10.5 20C12 27 20 28 26 24.5C28 23.5 28.5 24.5 27.5 25.5C25 28.5 20 30 15.5 30C10 28 8 23 9 18C10 14 13 11.5 17 12Z" fill="#11519c" /></svg>) },
  { id: "mcafee", icon: <svg width="28" height="30" viewBox="0 0 28 30"><path d="M0.5 0L14 6.5L27.5 0V23.5L14 30L0.5 23.5ZM7 10V19.5L14 23L21 19.5V10L14 13.7Z" fill="#c22f2f" fillRule="evenodd" /></svg> },
  { id: "myhp", icon: <svg width="30" height="30"><rect width="30" height="30" rx="1.5" fill="#0c97d6" /><text x="2.5" y="18.5" fontFamily={ARIAL} fontSize="8.5" fill="#fff" textLength="11">my</text><text x="14" y="19" fontFamily={ARIAL} fontSize="13.5" fontStyle="italic" fill="#fff" stroke="#fff" strokeWidth="0.3" textLength="13">hp</text></svg> },
  { id: "store", icon: (
    <svg width="30" height="30" viewBox="0 0 30 30"><defs><linearGradient id="st" x2="0.3" y2="1"><stop stopColor="#0d5fa5" /><stop offset="1" stopColor="#233a63" /></linearGradient></defs>
      <path d="M8 8V3Q8 2 9 2H21Q22 2 22 3V8" fill="none" stroke="#35b9ef" strokeWidth="2" /><path d="M0.5 6H29.5V25Q29.5 30 25 30H5Q0.5 30 0.5 25Z" fill="url(#st)" />
      <path d="M9.5 12.5H14.5V17.5H9.5Z" fill="#f25022" /><path d="M15.5 12.5H20.5V17.5H15.5Z" fill="#7fba00" /><path d="M9.5 18.5H14.5V23.5H9.5Z" fill="#17a8ee" /><path d="M15.5 18.5H20.5V23.5H15.5Z" fill="#ffb900" /></svg>) },
  { id: "help", icon: (
    <OverIcon><svg width="30" height="30"><circle cx="14" cy="15" r="14" fill="#0e96d4" stroke="#fff" strokeWidth="1.5" /><path d="M8.5 10.5Q9 6 14 6Q19 6 19.3 10Q19.3 13 16 15Q14.2 16.3 14 19" fill="none" stroke="#fff" strokeWidth="3.6" /><circle cx="13.8" cy="24" r="2.5" fill="#fff" /></svg>
      <svg width="30" height="30">{badge("#ffc107")}</svg></OverIcon>) },
  { id: "m365", icon: (
    <svg width="26" height="28" viewBox="0 0 26 28"><defs><linearGradient id="ma" x2="0.2" y2="1"><stop stopColor="#34518f" /><stop offset="0.5" stopColor="#6f8ad8" /><stop offset="1" stopColor="#c79bf0" /></linearGradient><linearGradient id="mb" x1="0" x2="0.6" y2="1"><stop stopColor="#3e63b8" /><stop offset="0.5" stopColor="#57a6e6" /><stop offset="1" stopColor="#7a63cf" /></linearGradient></defs>
      <path d="M13 0L16 7L8 11V17L13 21L8 26L1 21Q0 20 0 18V8Q0 6.5 1.5 5.5Z" fill="url(#ma)" />
      <path d="M13 0L24.5 6Q26 7 26 8.5V16L18 18V10L14 7.5L10 9Z" fill="url(#mb)" />
      <path d="M26 15V19Q26 21 24.5 22L14.5 27.5Q13 28.3 11.5 27.5L3 22.5L13 21L18 17.5Z" fill="#7b55b4" /></svg>) },
  { id: "explorer", running: true, icon: (
    <svg width="30" height="28" viewBox="0 0 30 28"><defs><linearGradient id="fo" x2="0" y2="1"><stop stopColor="#ffdc66" /><stop offset="1" stopColor="#fcbf2b" /></linearGradient></defs>
      <path d="M0 2Q0 1 1 1H9L13 4L9 8H0Z" fill="#d99a10" /><path d="M0 6.5H9L12 4H29Q30 4 30 5V27H0Z" fill="url(#fo)" /><path d="M5 28V22Q5 20 7 20H23Q25 20 25 22V28Z" fill="#1a73c9" /><path d="M9 24H21" stroke="#0a4d92" strokeWidth="1.5" /></svg>) },
  { id: "chrome-profile", active: true, icon: <OverIcon><Chrome /><svg width="30" height="30">{badge("#b9380f", "S")}</svg></OverIcon> },
];

const menu: [string, number][] = [["File", 35.5], ["Edit", 38.5], ["View", 44.5], ["Arrange", 64.5], ["Extras", 51], ["Help", 45]];

const FieldLabel = ({ children }: { children: string }) => <Label $size={12} $color="#616161" $ls={-0.15}>{children}</Label>;

const Check = ({ on, label, w }: { on?: boolean; label: string; w?: number }) => (
  <>
    <input type="checkbox" defaultChecked={on} />
    <FieldText $w={w}><FieldLabel>{label}</FieldLabel></FieldText>
  </>
);

const H = ({ children }: { children: string }) => <Label $size={12.5} $weight={700} $color="#616161" $ls={-0.35}>{children}</Label>;

const CategoryName = ({ children }: { children: string }) => <Label $size={13} $weight={600} $ls={-0.35}>{children}</Label>;

export default function App() {
  return (
    <Screen>
      <GlobalStyle />
      <TabStrip>
        <TabSearch><I w={12} vb="0 0 12 12"><path d="M2 4L6 8L10 4" stroke="#111" /></I></TabSearch>
        <Tab $active $w={291}>
          <svg width="20" height="20" viewBox="0 0 32 32"><circle cx="16" cy="16" r="16" fill="#f08705" /><g transform="translate(3.5 1.5) scale(.78 .82)"><DrawioMark /></g></svg>
          <TabTitle $w={209} $ml={10}><Label $size={15} $ls={-0.42} $color="#1f2b28">LibraryManagementSystem.drawio</Label></TabTitle>
          <TabClose $ml={15}><I w={12} vb="0 0 12 12" sw={1.9}><path d="M1.5 1.5L10.5 10.5M10.5 1.5L1.5 10.5" stroke="#17211f" /></I></TabClose>
        </Tab>
        <Tab $w={299}>
          <svg width="20" height="20" viewBox="0 0 16 16"><path fill="#20282b" d="M8 0C3.58 0 0 3.58 0 8c0 3.54 2.29 6.53 5.47 7.59.4.07.55-.17.55-.38 0-.19-.01-.82-.01-1.49-2.01.37-2.53-.49-2.69-.94-.09-.23-.48-.94-.82-1.13-.28-.15-.68-.52-.01-.53.63-.01 1.08.58 1.23.82.72 1.21 1.87.87 2.33.66.07-.52.28-.87.51-1.07-1.78-.2-3.64-.89-3.64-3.95 0-.87.31-1.59.82-2.15-.08-.2-.36-1.02.08-2.12 0 0 .67-.21 2.2.82.64-.18 1.32-.27 2-.27s1.36.09 2 .27c1.53-1.04 2.2-.82 2.2-.82.44 1.1.16 1.92.08 2.12.51.56.82 1.27.82 2.15 0 3.07-1.87 3.75-3.65 3.95.29.25.54.73.54 1.48 0 1.07-.01 1.93-.01 2.2 0 .21.15.46.55.38A8.01 8.01 0 0 0 16 8c0-4.42-3.58-8-8-8z" /></svg>
          <TabTitle $w={209} $ml={9.5}><Label $size={15} $ls={-0.5} $color="#3f5450">oomd_1BM22CS350/UseCaseDiagram</Label></TabTitle>
          <TabClose $ml={15}><I w={12} vb="0 0 12 12" sw={1.7}><path d="M1.5 1.5L10.5 10.5M10.5 1.5L1.5 10.5" stroke="#2c4440" /></I></TabClose>
        </Tab>
        <TabDivider />
        <NewTab><I w={15} vb="0 0 15 15" sw={2}><path d="M7.5 0.5V14.5M0.5 7.5H14.5" stroke="#2c4440" /></I></NewTab>
        <WindowButtons>
          <I w={13} vb="0 0 13 13" sw={1}><path d="M0 6.5H13" stroke="#000" /></I>
          <I w={14} vb="0 0 14 14" sw={1.2}><path d="M3 1.5Q3.5 .6 5 .6H10.5Q13.4 .6 13.4 3.5V9Q13.4 10.5 12.5 11" stroke="#000" /><rect x=".6" y="2.6" width="10.5" height="10.5" rx="1.5" stroke="#000" /></I>
          <I w={14} vb="0 0 14 14" sw={1.2}><path d="M.5 .5L13.5 13.5M13.5 .5L.5 13.5" stroke="#000" /></I>
        </WindowButtons>
      </TabStrip>
      <NavBack>
        <NavBar>
          <NavButtons>
            <I w={20} sw={2.3}><path d="M20 12H4M11.5 4.5L4 12L11.5 19.5" stroke="#2f4b47" /></I>
            <I w={20} sw={2.3}><path d="M4 12H20M12.5 4.5L20 12L12.5 19.5" stroke="#a3aeac" /></I>
            <I w={20} sw={2.4}><path d="M19.5 13A7.8 7.8 0 1 1 17.3 6.3L19.5 8.5" stroke="#2f4b47" /><path d="M20 3V9.3H13.7" stroke="#2f4b47" /></I>
          </NavButtons>
          <Omnibox>
            <SiteInfo><I w={17} vb="0 0 17 16" sw={2}><circle cx="4" cy="4" r="2.2" stroke="#1f2b28" /><path d="M9 4H16M1 12H8" stroke="#1f2b28" /><circle cx="13" cy="12" r="2.2" stroke="#1f2b28" /></I></SiteInfo>
            <Label $size={17} $ls={-0.27} $color="#3f524e"><Label $size={17} $ls={-0.27} $color="#10201d">app.diagrams.net</Label>/#G1TtqC7iEaCXM3ocLUdqw-FlkymBqkshQc#%7B"pageId"%3A"pOg6gsIHjiQ2UedFf0Kk"%7D</Label>
            <OmniActions>
              <I w={21} sw={2.4}><path d="M6 4.5H22V19.5M3 5.5V19.5H17M1 2L22 23M14 9.5H18.5V14" stroke="#3a4f4b" /><path d="M6 5.5H22" stroke="#3a4f4b" strokeWidth="3.5" /></I>
              <I w={21} sw={2.2}><path d="M12 3H2V18.5H22V14M18 2V11M14 8L18 12L22 8" stroke="#3a4f4b" /><path d="M8 20.5H16" stroke="#3a4f4b" strokeWidth="3.5" /></I>
              <I w={19} sw={2.4}><circle cx="9" cy="9" r="6.8" stroke="#3a4f4b" /><path d="M14 14L22 22M6 9H12" stroke="#3a4f4b" /></I>
              <I w={20}><path d="M12 2.5L14.6 9.2L21.7 9.5L16.2 14L18 21L12 17.1L6 21L7.8 14L2.3 9.5L9.4 9.2Z" stroke="#3a4f4b" strokeWidth="2.1" /></I>
            </OmniActions>
          </Omnibox>
          <Avatar><Label $size={13} $arial $color="#fff">S</Label></Avatar>
          <NavMenu><I w={5} h={19} vb="0 0 5 19" fill="#3a504c"><circle cx="2.5" cy="2.5" r="2.1" /><circle cx="2.5" cy="9.5" r="2.1" /><circle cx="2.5" cy="16.5" r="2.1" /></I></NavMenu>
        </NavBar>
      </NavBack>

      <Header>
        <svg width="32" height="36" viewBox="0 0 33 36" preserveAspectRatio="none"><rect width="33" height="36" rx="2" fill="#f2962b" /><g transform="translate(0.5 0)"><DrawioMark /></g></svg>
        <TitleBlock>
          <FileTitle><Label $size={17} $ls={-0.22}>LibraryManagementSystem.drawio</Label></FileTitle>
          <MenuRow>
            {menu.map(([name, w]) => <MenuItem key={name} $w={w}><Label $size={13} $ls={-0.2}>{name}</Label></MenuItem>)}
            <Label $size={12} $ls={-0.4} $color="#7b7d80">Saving...</Label>
          </MenuRow>
        </TitleBlock>
        <HeaderRight>
          <UserRow>
            <Label $size={10} $ls={-0.3}>Supriya S</Label>
            <Slot $w={10} $ml={4}><Caret $c="#9a9a9a" /></Slot>
            <Slot $w={16} $ml={5}>
              <I w={16} vb="0 0 16 16" sw={1.4}><circle cx="8" cy="8" r="3.5" /><path d="M8 0V2.5M8 13.5V16M0 8H2.5M13.5 8H16M2.5 2.5L4 4M12 12L13.5 13.5M2.5 13.5L4 12M12 4L13.5 2.5" /></I>
            </Slot>
          </UserRow>
          <ShareRow>
            <svg width="20" height="20"><path d="M1.5 0H18.5Q20 0 20 1.5V20L16 16H1.5Q0 16 0 14.5V1.5Q0 0 1.5 0Z" fill="#5c5e61" /><path d="M4 4.5H16M4 8H16M4 11.5H16" stroke="#f1f3f5" strokeWidth="2" /></svg>
            <ShareButton>
              <svg width="14" height="14"><circle cx="7" cy="4" r="3.9" /><path d="M0 14V12Q0 10 5 9H9Q14 10 14 12V14Z" /><rect x="5" y="6" width="4" height="5" /></svg>
              <Label $size={14} $arial>Share</Label>
            </ShareButton>
          </ShareRow>
        </HeaderRight>
      </Header>

      <Toolbar>
        <Slot $w={19} $ml={21}><svg width="18" height="18" fill="none" stroke="#000" strokeWidth="1.2"><rect x=".6" y=".6" width="16.8" height="16.8" /><path d="M.6 4.5H17.4M11 4.5V17" /><rect x="11.6" y="5.1" width="5.2" height="11.7" fill="#bbb" stroke="none" /></svg></Slot>
        <Slot $w={10} $ml={4}><Caret /></Slot>
        <Sep $ml={12} />
        <Slot $w={34} $ml={15}><Zoom><Label $size={13.5} $ls={-0.5}>100%</Label></Zoom></Slot>
        <Slot $w={10} $ml={7}><Caret /></Slot>
        <Sep $ml={12} />
        <Slot $w={20} $ml={12}><I w={15} vb="0 0 15 15" sw={1.5}><circle cx="6" cy="6" r="5" /><path d="M9.5 9.5L14.2 14.2" strokeWidth="2" /><path d="M6 3.5V8.5M3.5 6H8.5" /></I></Slot>
        <Slot $w={20} $ml={10}><I w={15} vb="0 0 15 15" sw={1.5}><circle cx="6" cy="6" r="5" /><path d="M9.5 9.5L14.2 14.2" strokeWidth="2" /><path d="M3.5 6H8.5" /></I></Slot>
        <Sep $ml={10} />
        <Slot $w={20} $ml={11}><I w={16} h={10} vb="0 0 16 10" fill="currentColor"><path d="M0 0.5L2.5 3Q8 -1 12.5 3Q15 5.5 15.5 9L14 9.5Q12 4 8 4Q6 4 4.500 5.5L7 8H0Z" /></I></Slot>
        <Slot $w={20} $ml={11} $dim><I w={16} h={10} vb="0 0 16 10" fill="currentColor"><path d="M16 0.5L13.5 3Q8 -1 3.5 3Q1 5.5 .5 9L2 9.5Q4 4 8 4Q10 4 11.5 5.5L9 8H16Z" /></I></Slot>
        <Sep $ml={10} />
        <Slot $w={20} $ml={12} $dim><I w={14} h={15} vb="0 0 14 15" fill="currentColor"><path d="M0 1H4L5 0H9L10 1H14V3H0ZM1.5 4.500H12.5V15H1.5Z" /></I></Slot>
        <Sep $ml={10} />
        <Slot $w={20} $ml={11} $dim><I w={15} h={15} vb="0 0 15 15" sw={1.2}><path d="M5 .6H.6V5.600M9.500 14.400H14.400V7.500M14.400 9V14.400" /><path d="M.6 .6H5" /><rect x="3" y="3" width="8.5" height="8.5" fill="currentColor" stroke="none" /></I></Slot>
        <Slot $w={20} $ml={10} $dim><I w={15} h={15} vb="0 0 15 15" sw={1.2}><rect x=".6" y=".6" width="6" height="6" /><rect x="8.4" y="8.4" width="6" height="6" /><path d="M4 8H8V4H12V7.5H7.5V12H4Z" fill="currentColor" /></I></Slot>
        <Sep $ml={11} />
        <Slot $w={20} $ml={11} $dim><I w={16} h={15} vb="0 0 16 15" fill="currentColor"><path d="M5 0L12.5 7.5L6.5 13.5L0 7L4.5 2.5L3.5 1.5ZM14 8.5Q16 11 15.5 12.5Q14.5 14 13 12.5Q12.5 11 14 8.5Z" /><path d="M3 6.5L6.5 3L10 6.5Z" fill="#f1f3f5" /></I></Slot>
        <Slot $w={22} $ml={10} $dim><I w={20} h={18} vb="0 0 20 18" fill="currentColor"><path d="M0 15H20V18H0ZM3 13L4 9.5L12.5 1L15.5 4L7 12.5ZM13.3 .2L14 -.3L17 2.5L16.2 3.3Z" /></I></Slot>
        <Slot $w={20} $ml={9} $dim><I w={15} vb="0 0 15 15" sw={2}><path d="M14 3V14H3" stroke="#cdd0d2" /><rect x="1" y="1" width="11" height="11" /></I></Slot>
        <Sep $ml={11} />
        <Slot $w={20} $ml={11}><I w={16} h={8} vb="0 0 16 8" sw={1.3}><path d="M0 4H14" /><path d="M11 1.200L16 4L11 6.800Z" fill="currentColor" stroke="none" /></I></Slot>
        <Slot $w={10} $ml={2}><Caret $c="#9a9a9a" /></Slot>
        <Slot $w={20} $ml={11}><I w={16} h={15} vb="0 0 16 15" sw={1.2}><path d="M1.5 11V7.5H14V4" /><rect x=".6" y="11" width="2.5" height="3" /><rect x="12.6" y=".6" width="2.5" height="3" /></I></Slot>
        <Slot $w={10} $ml={3}><Caret $c="#9a9a9a" /></Slot>
        <Sep $ml={12} />
        <Slot $w={20} $ml={10}><I w={14} vb="0 0 14 14" sw={3}><path d="M7 .5V13.5M.5 7H13.5" stroke="#000" /></I></Slot>
        <Slot $w={10} $ml={4}><Caret /></Slot>
        <Sep $ml={12} />
        <Slot $w={20} $ml={8}><I w={14} vb="0 0 14 14" sw={1.2}><path d="M.6 .6H13.4V13.4H.6ZM.6 4.9H13.4M.6 9.1H13.4M4.9 .6V13.4M9.1 .6V13.4" /></I></Slot>
        <Slot $w={10} $ml={3}><Caret $c="#9a9a9a" /></Slot>
        <ToolbarRight>
          <Slot $w={12} $ml={0}><I w={12} vb="0 0 12 12" sw={1.4}><path d="M.7 3.500V.7H3.500M8.500 .7H11.300V3.500M11.300 8.500V11.300H8.500M3.500 11.300H.7V8.500" /></I></Slot>
          <Slot $w={12} $ml={0}><I w={10} h={10} vb="0 0 10 10" sw={1.2}><rect x=".6" y=".6" width="8.8" height="8.8" /><rect x="6" y="1" width="3" height="8" fill="#b5b7ba" /></I></Slot>
          <Slot $w={12} $ml={0}><I w={11} h={11} vb="0 0 11 11" sw={1.5}><path d="M.7 5.3L5.5 1L10.3 5.3M.7 10.3L5.5 6L10.3 10.3" /></I></Slot>
        </ToolbarRight>
      </Toolbar>

      <Workspace>
        <Sidebar>
          <Palette>
            <PaletteBody>
              <ShapeGrid $mt={-20} $h={74}>{topRow}</ShapeGrid>
              <Category $h={36}><Twisty /><CategoryName>Misc</CategoryName></Category>
              {["Advanced", "Basic", "Arrows", "Flowchart"].map((c) => (
                <Category key={c} $h={35}><Twisty /><CategoryName>{c}</CategoryName></Category>
              ))}
              <Category $h={36}><Twisty /><CategoryName>Entity Relation</CategoryName></Category>
              <Category $h={35}><Twisty $open /><CategoryName>UML</CategoryName></Category>
              <PaletteEnd />
              <ShapeGrid $pt={6}>{umlShapes.map((s, i) => <React.Fragment key={i}>{s}</React.Fragment>)}</ShapeGrid>
            </PaletteBody>
            <PaletteTrack><PaletteThumb /></PaletteTrack>
          </Palette>
          <SidebarFooter>
            <MoreShapes>
              <svg width="10" height="10"><path d="M5 .5V9.5M.5 5H9.5" stroke="#fff" strokeWidth="1.6" /></svg>
              <Label $size={14} $arial $color="#fff">More Shapes</Label>
            </MoreShapes>
          </SidebarFooter>
        </Sidebar>
        <Center>
          <Diagram />
          <PageTabs>
            <PageMenu><I w={5} h={17} vb="0 0 5 17" fill="#77797c"><circle cx="2.5" cy="2.5" r="2.1" /><circle cx="2.5" cy="8.5" r="2.1" /><circle cx="2.5" cy="14.5" r="2.1" /></I></PageMenu>
            <PageTab><Label $size={12} $color="#616161" $ls={-0.3}>Page-1</Label><I w={8} h={6} vb="0 0 8 6" sw={1.6}><path d="M1 5L4 1.5L7 5" stroke="#616161" /></I></PageTab>
            <AddPage><I w={14} vb="0 0 14 14" sw={2}><path d="M7 0V14M0 7H14" stroke="#77797c" /></I></AddPage>
          </PageTabs>
        </Center>
        <Format>
          <FormatTabs>
            <FormatTab $w={106}><H>Diagram</H></FormatTab>
            <FormatTab $w={107} $off><H>Style</H></FormatTab>
            <FormatTab $w={27} $off><CloseBox><I w={9} vb="0 0 9 9" sw={2}><path d="M1 1L8 8M8 1L1 8" stroke="#b3c0ce" /></I></CloseBox></FormatTab>
          </FormatTabs>
          <Section $h={166} $pt={14}>
            <Heading $mb={6}><H>View</H></Heading>
            <Row $h={22}>
              <Check on label="Grid" w={81} />
              <SizeField><Label $size={12.5} $arial>10 pt</Label></SizeField>
              <Spinner><svg width="10" height="19" fill="none" stroke="#777"><path d="M2 7L5 4L8 7ZM2 13L5 16L8 13ZM0 9.5H10" /></svg></Spinner>
              <ColorButton><Swatch /><svg width="12" height="12" viewBox="0 0 12 12" fill="none" stroke="#555"><path d="M1 11L2 8.5L7 3.5L8.5 5L3.5 10Z" /><path d="M6.5 2.5L9.5 5.5M8.5 3.5L10.5 1.5" strokeWidth="2" /></svg></ColorButton>
            </Row>
            <Row $h={23}><Check on label="Page View" /></Row>
            <Row $h={24}>
              <FieldText $ml={19} $w={81}><FieldLabel>Background</FieldLabel></FieldText>
              <PlainButton $w={110} $h={22}><Label $size={12.5} $arial>Change...</Label></PlainButton>
            </Row>
            <Row $h={26}><Check label="Background Color" /></Row>
            <Row $h={21}><Check label="Shadow" w={85} /><Check label="Sketch" /></Row>
          </Section>
          <Section $h={139} $pt={11}>
            <Heading $mb={3}><H>Options</H></Heading>
            {["Connection Arrows", "Connection Points", "Guides", "Autosave"].map((o) => <Row key={o} $h={24}><Check on label={o} /></Row>)}
          </Section>
          <Section $h={93} $pt={11}>
            <Heading $mb={3}><H>Paper Size</H></Heading>
            <PaperSelect><Label $size={12.5} $arial>US-Letter (8,5" x 11")</Label><I w={10} h={7} vb="0 0 10 7" sw={2.2}><path d="M.8 1L5 5.2L9.2 1" stroke="#000" /></I></PaperSelect>
            <Row $h={28} $indent={9}>
              <input type="radio" name="orientation" defaultChecked /><FieldText $w={49}><FieldLabel>Portrait</FieldLabel></FieldText>
              <input type="radio" name="orientation" /><FieldText><FieldLabel>Landscape</FieldLabel></FieldText>
            </Row>
          </Section>
          <Section $h={65} $pt={12}>
            <PlainButton $w={210} $h={20} $mb={2}><Label $size={12.5} $arial>Edit Data...</Label></PlainButton>
            <PlainButton $w={210} $h={20}><Label $size={12.5} $arial>Clear Default Style</Label></PlainButton>
          </Section>
        </Format>
      </Workspace>

      <Taskbar>
        <Widget>
          <svg width="34" height="40" viewBox="0 0 34 40">
            <g fill="#f08a1c" stroke="#c96a08" strokeWidth=".8"><path d="M1 23V27Q12 32 23 27V23Z" /><ellipse cx="12" cy="23" rx="11" ry="3.5" /><path d="M5 17V20Q15 25 24 20V17Z" /><ellipse cx="14" cy="17" rx="10" ry="3.3" /><path d="M2 11V14Q12 19 22 14V11Z" /><ellipse cx="12" cy="11" rx="10" ry="3.3" fill="#f9a53c" /></g>
            <path d="M10 37L14.5 32.500L19 37" fill="none" stroke="#5fa812" strokeWidth="3.6" />
            <circle cx="23.7" cy="10" r="10" fill="#c42b1c" /><text x="23.7" y="15" textAnchor="middle" fontFamily={UI} fontSize="14" fill="#fff">1</text>
          </svg>
          <Stack $ml={5}><Label $size={15} $ls={-0.2} $color="#1b1b1b">USD/CAD</Label><Label $size={15} $ls={-0.3} $color="#157a15">+0.52%</Label></Stack>
        </Widget>
        <Apps>
          {taskIcons.map((t) => <AppSlot key={t.id} $active={t.active} $running={t.running}>{t.icon}</AppSlot>)}
        </Apps>
        <Tray>
          <TrayIcon $ml={0}><I w={14} h={9} vb="0 0 14 9" sw={1.8}><path d="M1 8L7 2L13 8" stroke="#1b1b1b" /></I></TrayIcon>
          <TrayIcon $ml={23}><svg width="21" height="17" viewBox="0 0 21 17"><path d="M5 14.5A4 4 0 0 1 4.5 6.7A6 6 0 0 1 15.5 6A4.3 4.3 0 0 1 16 14.5Z" fill="#bcaec4" stroke="#1b1b1b" strokeWidth="1.4" /><path d="M4 .5L18.5 16.5" stroke="#1b1b1b" strokeWidth="1.4" /></svg></TrayIcon>
          <Stack $align="center" $ml={21} $w={33} $up={2}><Label $size={14.5} $ls={-0.4} $color="#1b1b1b">ENG</Label><Label $size={14.5} $color="#1b1b1b">IN</Label></Stack>
          <TrayIcon $ml={20}><I w={20} h={15} vb="0 0 20 15" sw={1.4}><g stroke="#1b1b1b"><path d="M1 5.5Q10 -3 19 5.5M3.8 8.3Q10 2.3 16.2 8.3M6.6 11Q10 7.6 13.4 11" /><circle cx="10" cy="13" r="1.2" fill="#1b1b1b" /></g></I></TrayIcon>
          <TrayIcon $ml={10}><I w={20} h={14} vb="0 0 20 14" sw={1.3}><path d="M1 4.5H4L8 1V13L4 9.5H1ZM12.5 4L18.5 10M18.5 4L12.5 10" stroke="#1b1b1b" /></I></TrayIcon>
          <TrayIcon $ml={10}><svg width="21" height="17"><rect x="2.7" y="4.7" width="15" height="10.6" rx="2.5" fill="none" stroke="#1b1b1b" strokeWidth="1.4" /><rect x="4" y="6" width="12.500" height="8" rx="1" fill="#1b1b1b" /><path d="M19 8V12" stroke="#1b1b1b" strokeWidth="2.5" /><path d="M4 0L0 5.5H3L2 9L7 3.5H4.5L6 0Z" fill="#1b1b1b" /></svg></TrayIcon>
          <Stack $align="flex-end" $ml={19} $w={79} $up={4}><Label $size={14.5} $ls={-0.2} $color="#1b1b1b">20:51</Label><Label $size={14.5} $ls={0.05} $color="#1b1b1b">02-12-2024</Label></Stack>
          <TrayIcon $ml={11}><svg width="18" height="18" viewBox="0 0 18 18" fill="none" stroke="#1b1b1b" strokeWidth="1.3"><path d="M10 1.3Q3 1 3 7V11L1 15H15L13.5 12M6 15Q8 18.5 10 15" /><path d="M6.5 7H10L6.5 11.5H10.5M12 .8H16.5L12 6H17" /></svg></TrayIcon>
          <DesktopEdge />
        </Tray>
      </Taskbar>
      <Tooltip><Label $size={14.5} $ls={0} $color="#1b1b1b">Show desktop</Label></Tooltip>
    </Screen>
  );
}
